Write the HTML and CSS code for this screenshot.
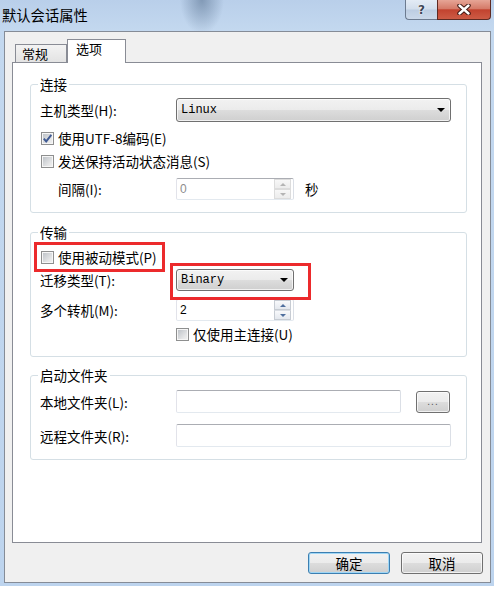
FILE: index.html
```html
<!DOCTYPE html>
<html lang="zh-CN">
<head>
<meta charset="utf-8">
<title>默认会话属性</title>
<link rel="stylesheet" href="styles.css">
</head>
<body>
<div class="window">
  <div class="titlebar">
    <span class="title">默认会话属性</span>
    <div class="caption">
      <span class="cbtn help">?</span>
      <span class="cbtn close">
        <svg width="14" height="11" viewBox="0 0 14 11">
          <path d="M2.5 1.5 L11.5 9.5 M11.5 1.5 L2.5 9.5" stroke="#3b1510" stroke-width="4.4" stroke-linecap="round" fill="none"/>
          <path d="M2.5 1.5 L11.5 9.5 M11.5 1.5 L2.5 9.5" stroke="#ffffff" stroke-width="2.4" stroke-linecap="round" fill="none"/>
        </svg>
      </span>
    </div>
  </div>
  <div class="client">
    <div class="tabs">
      <div class="tab">常规</div>
      <div class="tab active">选项</div>
    </div>
    <div class="panel">
      <div class="group g1">
        <div class="gtitle">连接</div>
        <div class="row r1">
          <span class="label">主机类型(H):</span>
          <div class="combo wide"><span class="ctext">Linux</span><span class="arrow"></span></div>
        </div>
        <div class="row r2 cbrow">
          <span class="cb"><svg width="11" height="11" viewBox="0 0 11 11"><path d="M1.8 5.6 L4.2 8.4 L9.3 1.8" stroke="#3f5a93" stroke-width="1.9" fill="none"/></svg></span>
          <span>使用UTF-8编码(E)</span>
        </div>
        <div class="row r3 cbrow">
          <span class="cb"></span>
          <span>发送保持活动状态消息(S)</span>
        </div>
        <div class="row r4">
          <span class="label indent">间隔(I):</span>
          <div class="field spinf disabled">
            <span class="ftext">0</span>
            <span class="spinner">
              <span class="sbtn"><span class="up"></span></span>
              <span class="sbtn"><span class="down"></span></span>
            </span>
          </div>
          <span class="unit">秒</span>
        </div>
      </div>

      <div class="group g2">
        <div class="gtitle">传输</div>
        <div class="row r5">
          <span class="cbrow mark1">
            <span class="cb"></span>
            <span>使用被动模式(P)</span>
          </span>
        </div>
        <div class="row r6">
          <span class="label">迁移类型(T):</span>
          <div class="combo narrow mark2"><span class="ctext">Binary</span><span class="arrow"></span></div>
        </div>
        <div class="row r7">
          <span class="label">多个转机(M):</span>
          <div class="field spinf">
            <span class="ftext">2</span>
            <span class="spinner">
              <span class="sbtn"><span class="up"></span></span>
              <span class="sbtn"><span class="down"></span></span>
            </span>
          </div>
        </div>
        <div class="row r8 cbrow">
          <span class="cb"></span>
          <span>仅使用主连接(U)</span>
        </div>
      </div>

      <div class="group g3">
        <div class="gtitle">启动文件夹</div>
        <div class="row r9">
          <span class="label">本地文件夹(L):</span>
          <div class="field path"></div>
          <span class="browse">...</span>
        </div>
        <div class="row r10">
          <span class="label">远程文件夹(R):</span>
          <div class="field full"></div>
        </div>
      </div>
    </div>
    <div class="actions">
      <span class="btn default">确定</span>
      <span class="btn">取消</span>
    </div>
  </div>
</div>
</body>
</html>
```
FILE: styles.css
```css
*, *::before, *::after { box-sizing: border-box; }
html, body { margin: 0; padding: 0; background: #ffffff; }
body {
  font-family: "Noto Sans CJK SC", "Noto Sans", sans-serif;
  font-size: 13.5px;
  color: #000;
}
.window {
  width: 494px;
  height: 586px;
  display: flex;
  flex-direction: column;
  padding-bottom: 3px;
  background:
    radial-gradient(ellipse 22px 34px at 202px 0px, rgba(85, 110, 140, 0.55), rgba(85, 110, 140, 0) 100%),
    linear-gradient(#b9cfea 0px, #c3d8ef 30px, #bdd4ee 100%);
}
.titlebar {
  height: 31px;
  flex: none;
  display: flex;
  justify-content: space-between;
  align-items: flex-start;
}
.title {
  margin: 6px 0 0 2px;
  font-size: 14.3px;
  line-height: 18px;
  color: #000;
}
.caption { display: flex; margin-right: 3px; }
.cbtn {
  height: 20px;
  display: flex;
  align-items: center;
  justify-content: center;
  border: 1px solid #6c7b90;
  border-top: none;
}
.help {
  width: 32px;
  border-radius: 0 0 0 4px;
  border-right: none;
  background: linear-gradient(#e3ebf5 0%, #d2deec 48%, #bccde2 52%, #cbd9ea 100%);
  font-family: "DejaVu Sans", sans-serif;
  font-weight: bold;
  font-size: 12px;
  color: #3d4756;
  text-shadow: 0 0 2px #fff, 0 0 1px #fff;
}
.close {
  width: 54px;
  border-color: #5e2a22;
  border-radius: 0 0 4px 0;
  background: linear-gradient(#e6a596 0%, #d57b69 45%, #c2432f 52%, #cd5b45 100%);
}
.client {
  flex: 1;
  margin: 0 3px 0 4px;
  border: 1px solid #858c97;
  background: #f0f0f0;
  display: flex;
  flex-direction: column;
}
.tabs {
  height: 30px;
  flex: none;
  display: flex;
  align-items: flex-end;
  padding-left: 10px;
}
.tab {
  height: 18px;
  width: 52px;
  border: 1px solid #898c95;
  border-bottom: none;
  background: linear-gradient(#f3f3f3, #e3e3e3);
  padding: 0 0 0 6px;
  font-size: 13px;
  line-height: 17px;
}
.tab.active {
  height: 24px;
  width: 59px;
  margin-bottom: -1px;
  margin-left: 0;
  background: #fff;
  padding: 1px 0 0 8px;
  position: relative;
  z-index: 1;
  line-height: 16px;
}
.panel {
  flex: 1;
  margin: 0 8px 0 7px;
  background: #fff;
  border: 1px solid #898c95;
  padding: 21px 14px 0 17px;
}
.group {
  border: 1px solid #d5dfe5;
  border-radius: 3px;
  padding: 0 15px 0 9px;
}
.g1 { padding-bottom: 12px; }
.g2 { margin-top: 19px; padding-bottom: 13px; }
.g3 { margin-top: 18px; padding-bottom: 12px; }
.gtitle {
  width: fit-content;
  margin: -9px 0 0 -2px;
  padding: 0 2px;
  background: #fff;
  line-height: 16px;
}
.row { display: flex; align-items: center; line-height: 18px; }
.label { width: 136px; flex: none; }
.label.indent { padding-left: 18px; }
.r1 { margin-top: 6px; height: 24px; }
.r2 { margin-top: 7px; height: 18px; }
.r3 { margin-top: 5px; height: 18px; }
.r4 { margin-top: 8px; height: 22px; }
.r5 { margin-top: 8px; height: 18px; }
.r6 { margin-top: 3px; height: 22px; }
.r7 { margin-top: 8px; height: 22px; }
.r8 { margin-top: 4px; height: 18px; padding-left: 136px; }
.r9 { margin-top: 7px; height: 23px; }
.r10 { margin-top: 11px; height: 23px; }

.cbrow { display: flex; align-items: center; gap: 4px; }
.cb {
  width: 13px;
  height: 13px;
  flex: none;
  margin-left: 1px;
  border: 1px solid #8e8f8f;
  background: linear-gradient(135deg, #b9bec4 0%, #e6e7e8 70%, #f2f2f2 100%);
  box-shadow: inset 0 0 0 1px #f6f6f6;
  display: flex;
  align-items: center;
  justify-content: center;
}
.r8 .cb { margin-left: 0; }

.combo {
  display: flex;
  align-items: center;
  justify-content: space-between;
  border: 1px solid #707070;
  border-radius: 3px;
  background: linear-gradient(#f2f2f2 0%, #ebebeb 50%, #dddddd 50%, #cfcfcf 100%);
  box-shadow: inset 0 0 0 1px rgba(255, 255, 255, 0.7);
  padding: 0 5px 0 4px;
  font-family: "Liberation Mono", monospace;
  font-size: 12px;
}
.combo.wide { width: 275px; height: 24px; }
.combo.narrow { width: 118px; height: 22px; }
.arrow {
  width: 0;
  height: 0;
  border-left: 4px solid transparent;
  border-right: 4px solid transparent;
  border-top: 4px solid #000;
}
.mark1, .mark2 { position: relative; }
.mark1::after {
  content: "";
  position: absolute;
  left: -6px;
  top: -6px;
  width: 131px;
  height: 30px;
  border: 3px solid #ec2a2c;
}
.mark2::after {
  content: "";
  position: absolute;
  left: -7px;
  top: -7px;
  width: 141px;
  height: 37px;
  border: 3px solid #ec2a2c;
}

.field {
  display: flex;
  align-items: center;
  background: #fff;
  border: 1px solid;
  border-color: #abadb3 #dbdfe6 #e3e9ef #e2e3ea;
  border-radius: 2px;
}
.spinf { width: 118px; height: 22px; padding-left: 3px; }
.ftext { font-family: "Liberation Sans", sans-serif; font-size: 12px; }
.disabled .ftext { color: #8d8d8d; }
.spinner {
  margin-left: auto;
  margin-right: 2px;
  width: 17px;
  display: flex;
  flex-direction: column;
}
.sbtn {
  height: 10px;
  border: 1px solid #c7ccd3;
  background: linear-gradient(#f8f9fb, #e4e8ee);
  display: flex;
  align-items: center;
  justify-content: center;
}
.sbtn + .sbtn { border-top-color: #d9dde3; }
.up, .down {
  width: 0;
  height: 0;
  border-left: 3.5px solid transparent;
  border-right: 3.5px solid transparent;
}
.up { border-bottom: 3px solid #4f6f9e; }
.down { border-top: 3px solid #4f6f9e; }
.disabled .sbtn { border-color: #dcdcdc; background: linear-gradient(#f7f7f7, #ececec); }
.disabled .up { border-bottom-color: #b4b4b4; }
.disabled .down { border-top-color: #b4b4b4; }
.unit { margin-left: 11px; }

.path { width: 225px; height: 23px; }
.full { width: 275px; height: 23px; }
.browse {
  margin-left: 15px;
  width: 34px;
  height: 22px;
  border: 1px solid #707070;
  border-radius: 3px;
  background: linear-gradient(#f2f2f2 0%, #ebebeb 50%, #dddddd 50%, #cfcfcf 100%);
  box-shadow: inset 0 0 0 1px rgba(255, 255, 255, 0.7);
  display: flex;
  align-items: center;
  justify-content: center;
  font-family: "Liberation Sans", sans-serif;
  font-size: 10px;
  letter-spacing: 1px;
  color: #555;
}

.actions {
  flex: none;
  display: flex;
  justify-content: flex-end;
  gap: 11px;
  margin-top: 9px;
  padding: 0 7px 8px 0;
}
.btn {
  width: 82px;
  height: 22px;
  border: 1px solid #707070;
  border-radius: 3px;
  background: linear-gradient(#f2f2f2 0%, #ebebeb 50%, #dddddd 50%, #cfcfcf 100%);
  box-shadow: inset 0 0 0 1px rgba(255, 255, 255, 0.7);
  display: flex;
  align-items: center;
  justify-content: center;
  font-size: 13.5px;
  line-height: 18px;
}
.btn.default {
  border-color: #3c7fb1;
  box-shadow: inset 0 0 0 1px #9fd6f5;
}
```
